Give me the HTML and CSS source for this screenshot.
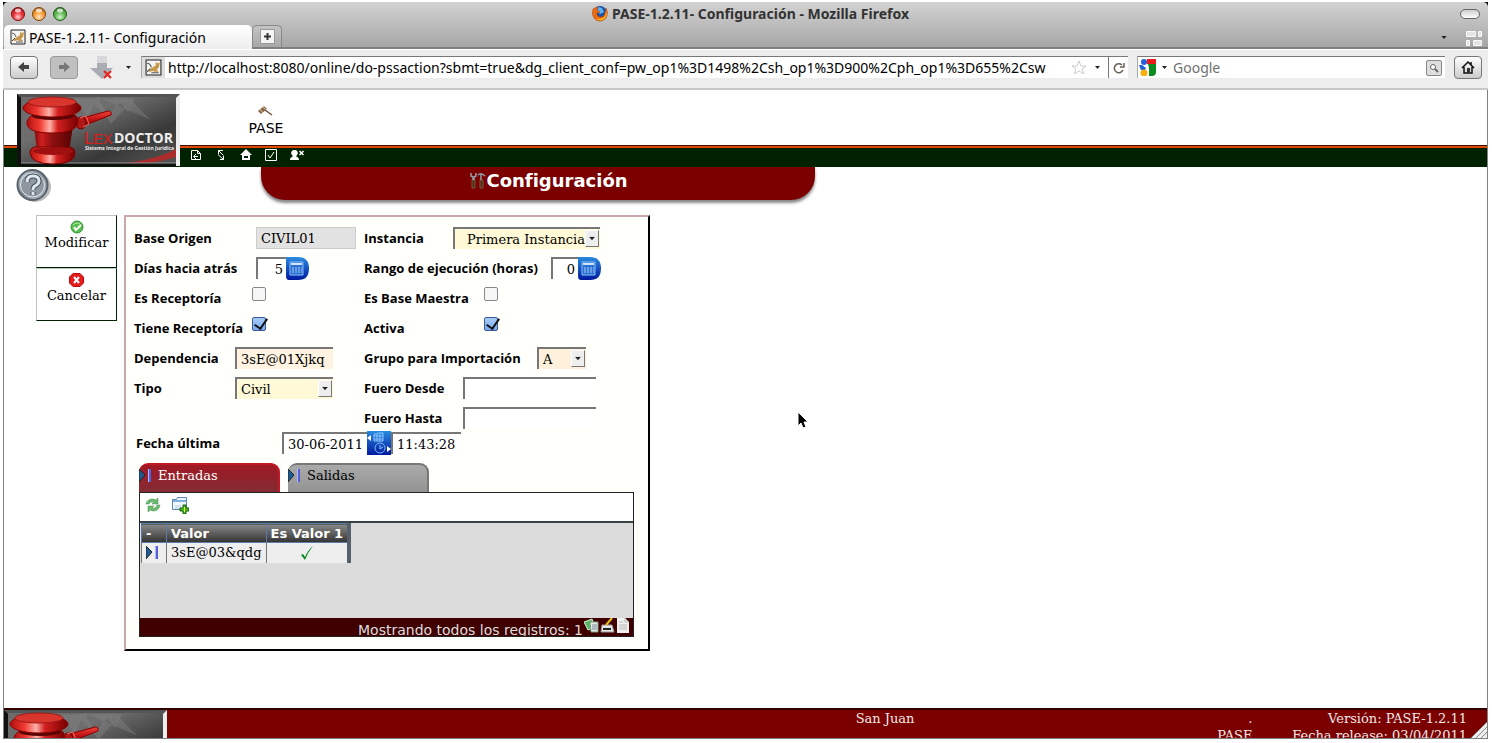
FILE: index.html
```html
<!DOCTYPE html>
<html lang="es">
	<head>
		<meta charset="utf-8">
		<title>PASE-1.2.11- Configuración</title>
		<link rel="stylesheet" href="styles.css">
	</head>
	<body>
		<svg class="defs" aria-hidden="true">
			<defs>
				<linearGradient id="metal" x1="0" y1="0" x2="1" y2="1">
					<stop offset="0" stop-color="#6c6c6c"/><stop offset=".35" stop-color="#6e6e6e"/><stop offset=".7" stop-color="#383838"/><stop offset="1" stop-color="#555"/>
				</linearGradient>
				<linearGradient id="rojo" x1="0" x2="1">
					<stop offset="0" stop-color="#b01010"/><stop offset=".25" stop-color="#f03a30"/><stop offset=".45" stop-color="#ffb0a8"/><stop offset=".6" stop-color="#d42020"/><stop offset="1" stop-color="#700"/>
				</linearGradient>
				<linearGradient id="rojov" x1="0" x2="0" y1="0" y2="1">
					<stop offset="0" stop-color="#f04038"/><stop offset=".5" stop-color="#c01414"/><stop offset="1" stop-color="#600"/>
				</linearGradient>
				<linearGradient id="cuerpo" x1="0" x2="1">
					<stop offset="0" stop-color="#7c0808"/><stop offset=".2" stop-color="#d02020"/><stop offset=".45" stop-color="#901010"/><stop offset="1" stop-color="#580303"/>
				</linearGradient>
				<linearGradient id="azul" x1="0" x2="0" y1="0" y2="1">
					<stop offset="0" stop-color="#2a8be0"/><stop offset="1" stop-color="#0018a0"/>
				</linearGradient>
				<radialGradient id="bola" cx=".5" cy=".75" r=".7">
					<stop offset="0" stop-color="#fff" stop-opacity=".8"/><stop offset=".6" stop-color="#fff" stop-opacity=".1"/><stop offset="1" stop-color="#000" stop-opacity=".4"/>
				</radialGradient>
				<linearGradient id="acero" x1="0" y1="0" x2="1" y2="1">
					<stop offset="0" stop-color="#cfd6dc"/><stop offset=".5" stop-color="#7e8890"/><stop offset="1" stop-color="#c4ccd2"/>
				</linearGradient>
			</defs>
			<symbol id="logo" viewBox="0 0 163 72">
				<rect width="163" height="72" fill="#111"/>
				<path d="M0 0h163v72l-5-4V4H4z" fill="#555"/>
				<path d="M163 0v72h-4V4z" fill="#eee"/>
				<rect x="4" y="3" width="155" height="66" fill="url(#metal)"/>
				<path d="M57 5h60l-6 12-8-10-12 17-14-15-6 13zM80 3l14 26 20-22 18 18" fill="#8a8a8a" fill-opacity=".35" stroke="#888" stroke-opacity=".4"/>
				<path d="M105 69q34-3 54-14v8q-16 5-30 6z" fill="#c22" fill-opacity=".75"/>
				<path d="M4 69h155" stroke="#999"/>
				<path d="M58 26l33-9q4 0 3 4L61 34z" fill="url(#rojov)" stroke="#800"/>
				<ellipse cx="64" cy="29" rx="5" ry="6" fill="#b01818" stroke="#600"/>
				<path d="M63 24l6-2 3 8-6 3" fill="none" stroke="#f66"/>
				<path d="M17 32h39l-4 26H20z" fill="url(#cuerpo)"/>
				<path d="M13 59q0-6 6-6h32q7 0 7 6 0 11-22 11T13 59z" fill="url(#rojo)" stroke="#700"/>
				<ellipse cx="36" cy="57" rx="20" ry="4" fill="#a01010"/>
				<path d="M10 28q2-8 12-8h32q6 0 7 7 0 12-26 12T10 28z" fill="url(#rojo)" stroke="#800"/>
				<ellipse cx="36" cy="22" rx="21" ry="4" fill="#5a0505"/>
				<ellipse cx="35" cy="14" rx="29" ry="9" fill="url(#rojo)" stroke="#800"/>
				<ellipse cx="35" cy="8" rx="24" ry="5" fill="#d8362c" stroke="#a01818"/>
			</symbol>
			<symbol id="gato" viewBox="0 0 16 16">
				<path d="M1 1h14v14H1z" fill="#f4f4f4" stroke="#222"/>
				<path d="M3 11l4-3 3-2 0-3 2 1 2-1-1 5-2 2 2 2H8l1-1-5 1z" fill="#c89848"/>
				<path d="M2 4q3 0 4 4M2 12l3-3M6 13h7" stroke="#555" fill="none"/>
			</symbol>
			<symbol id="calc" viewBox="0 0 23 23">
				<path d="M0 0h12q11 0 11 11.500T12 23H3q-3 0-3-4z" fill="url(#azul)"/>
				<path d="M4 5h13v13H4z" fill="#2b6fd0" stroke="#8cc0f8"/>
				<path d="M5 7h11" stroke="#cfe6ff" stroke-width="2"/>
				<path d="M6 11h10M6 13h10M6 15h10" stroke="#a8d0ff" stroke-dasharray="2 1"/>
			</symbol>
			<symbol id="marca" viewBox="0 0 14 15">
				<path d="M0 1l6 6-6 7z" fill="#1d5c92" stroke="#222"/>
				<path d="M9 1h3v13H9z" fill="#5560d8"/><path d="M9 1h1v13H9z" fill="#b0b8ff"/>
			</symbol>
			<symbol id="flecha" viewBox="0 0 7 4"><path d="M0 0h7L3.500 4z" fill="#222"/></symbol>
		</svg>

		<div class="ventana">
			<div class="titulo">
				<div class="semaforo">
					<svg viewBox="0 0 14 14"><circle cx="7" cy="7" r="6.500" fill="#e8141c" stroke="#801010"/><circle cx="7" cy="7" r="6" fill="url(#bola)"/><ellipse cx="7" cy="3.500" rx="3" ry="2" fill="#fff" opacity=".7"/></svg>
					<svg viewBox="0 0 14 14"><circle cx="7" cy="7" r="6.500" fill="#f89018" stroke="#804010"/><circle cx="7" cy="7" r="6" fill="url(#bola)"/><ellipse cx="7" cy="3.500" rx="3" ry="2" fill="#fff" opacity=".7"/></svg>
					<svg viewBox="0 0 14 14"><circle cx="7" cy="7" r="6.500" fill="#48b038" stroke="#206018"/><circle cx="7" cy="7" r="6" fill="url(#bola)"/><ellipse cx="7" cy="3.500" rx="3" ry="2" fill="#fff" opacity=".7"/></svg>
				</div>
				<div class="nombre">
					<svg width="16" height="17" viewBox="0 0 16 17"><circle cx="8" cy="8" r="7" fill="#1d50a8"/><path d="M6 2l4 1 2 4-4 2-3-3z" fill="#5cb4ee"/><path d="M1 4q-2 7 3 11 6 3 10-2 3-5 0-10 0 3-1 4 0 5-5 5-4-1-3-4l3-1-3-2 1-3-3 1z" fill="#ee6a10" stroke="#b03a08" stroke-width=".5"/><path d="M14 5q1 5-3 8-4 2-7 0 3 4 8 1 4-3 2-9z" fill="#fcc820"/></svg>
					<span>PASE-1.2.11- Configuración - Mozilla Firefox</span>
				</div>
				<button class="pildora" aria-label="Ocultar barra"></button>
			</div>
			<div class="pestanas">
				<div class="pestana"><svg width="16" height="16"><use href="#gato"/></svg><span>PASE-1.2.11- Configuración</span></div>
				<button class="nueva" aria-label="Nueva pestaña"><svg width="15" height="15" viewBox="0 0 15 15"><path d="M.5.500h14v14H.5z" fill="#f4f4f4" stroke="#999"/><path d="M4 7.500h7M7.500 4v7" stroke="#333" stroke-width="2"/></svg></button>
				<span class="lista"><svg width="6" height="3"><use href="#flecha"/></svg></span>
				<svg class="grupos" width="17" height="15" viewBox="0 0 17 15"><path d="M1.500.500h9v5h-9zM13.500.500h3v5h-3zM1.500 9.500h3v5h-3zM8.500 9.500h8v5h-8z" fill="#e4e4e4" stroke="#fafafa"/></svg>
			</div>
			<div class="navegacion">
				<button class="boton" aria-label="Atrás"><svg width="14" height="12" viewBox="0 0 14 12"><path d="M1 6l6-5v3h5v4H7v3z" fill="#444"/></svg></button>
				<button class="boton apagado" aria-label="Adelante"><svg width="14" height="12" viewBox="0 0 14 12"><path d="M13 6L7 1v3H2v4h5v3z" fill="#777"/></svg></button>
				<svg class="bajar" width="23" height="24" viewBox="0 0 23 24"><path d="M7 1h10v12h6L12 24 0 13h7z" fill="#a9acb2"/><path d="M7 1h10v7H7z" fill="#d8d8da"/><path d="M14 16l7 7M21 16l-7 7" stroke="#e82020" stroke-width="2"/></svg>
				<svg class="menos" width="5" height="3"><use href="#flecha"/></svg>
				<div class="direccion">
					<span class="sitio"><svg width="17" height="17"><use href="#gato"/></svg></span>
					<input type="text" aria-label="Dirección" value="http://localhost:8080/online/do-pssaction?sbmt=true&amp;dg_client_conf=pw_op1%3D1498%2Csh_op1%3D900%2Cph_op1%3D655%2Csw">
					<svg width="16" height="15" viewBox="0 0 16 15"><path d="M8 1l2 5h5l-4 3 2 5-5-3-5 3 2-5-4-3h5z" fill="#fff" stroke="#ccc"/></svg>
					<svg class="abre" width="5" height="3"><use href="#flecha"/></svg>
					<button class="recargar" aria-label="Recargar"><svg width="12" height="12" viewBox="0 0 12 12"><path d="M10 8a4.500 4.500 0 1 1-1-5M7 5h4V1" fill="none" stroke="#666052" stroke-width="1.500"/></svg></button>
				</div>
				<div class="buscar">
					<svg width="17" height="17" viewBox="0 0 17 17"><path d="M8 0h9v5H8z" fill="#f01818"/><path d="M9 5h8v8q0 4-4 4h-3V9z" fill="#0c8c20"/><circle cx="5" cy="3" r="3" fill="#2060d8"/><path d="M0 6h3l4 3-1 2H2z" fill="#2060d8"/><circle cx="5" cy="14" r="3.500" fill="#f8b010"/></svg>
					<svg width="5" height="3"><use href="#flecha"/></svg>
					<input type="text" aria-label="Buscar" placeholder="Google">
					<button class="lupa" aria-label="Buscar en la web"><svg width="10" height="10" viewBox="0 0 10 10"><circle cx="4" cy="4" r="2.500" fill="#fff" stroke="#666"/><path d="M6 6l3 3" stroke="#666" stroke-width="2"/></svg></button>
				</div>
				<button class="boton casa" aria-label="Inicio"><svg width="16" height="16" viewBox="0 0 16 16"><path d="M2 9l6-6 6 6M4 8v6h8V8M11 3v3" fill="none" stroke="#111" stroke-width="1.500"/><path d="M7 9h3v5H7z" fill="#333"/></svg></button>
			</div>

			<div class="pagina">
				<header class="cabecera">
					<svg class="logo" width="163" height="72">
						<use href="#logo"/>
						<text x="67" y="50" class="logo-lex">L<tspan class="logo-ex">EX</tspan><tspan class="logo-guion">-</tspan></text>
						<text x="97" y="49" class="logo-doctor">DOCTOR</text>
						<text x="68" y="56" class="logo-sub">Sistema Integral de Gestión Jurídica</text>
					</svg>
					<div class="menu">
						<a href="#" class="modulo"><svg width="15" height="11" viewBox="0 0 15 11"><path d="M0 6l6-5 3 3-6 5z" fill="#8a6a48"/><path d="M2 4l3 4M5 2l3 3" stroke="#d8c8a8"/><path d="M7 5l7 5" stroke="#6a5038" stroke-width="1.500"/></svg>PASE</a>
						<nav class="iconos">
							<a href="#" aria-label="Salir"><svg viewBox="0 0 12 12"><path d="M1.500 1.500h6l3 3v6h-9zM7.500 1.500v3h3M8 7.500H4M6 5L3.500 7.500 6 10" fill="none" stroke="#fff"/></svg></a>
							<a href="#" aria-label="Refrescar"><svg viewBox="0 0 12 12"><path d="M3.500 5V1.500H8M3.500 1.500l5 5M5 10.500h3.500V7M8.500 10.500L3 5.500" fill="none" stroke="#fff"/></svg></a>
							<a href="#" aria-label="Inicio"><svg viewBox="0 0 12 12"><path d="M6 0l6 6H0zM2 6h8v5H2z" fill="#fff"/><path d="M4 7h4v2H4z" fill="#020"/></svg></a>
							<a href="#" aria-label="Tareas"><svg viewBox="0 0 12 12"><path d="M.5.500h11v11H.5zM3 6l2 3 4-6" fill="none" stroke="#fff"/></svg></a>
							<a href="#" aria-label="Usuario"><svg class="ancho" viewBox="0 0 14 12"><path d="M4.500 1a3 3 0 0 1 2 5.500V8q2.500 0 2.500 3H0q0-3 2.500-3V6.500a3 3 0 0 1 2-5.500z" fill="#fff"/><path d="M9.500 2l4 4M13.500 2l-4 4" stroke="#fff" stroke-width="1.500"/></svg></a>
						</nav>
					</div>
				</header>
				<div class="encabezado">
					<a href="#" class="ayuda" aria-label="Ayuda"><svg width="37" height="33" viewBox="0 0 37 33"><ellipse cx="20" cy="18" rx="16" ry="15" fill="#bbb"/><circle cx="17.500" cy="16" r="15" fill="url(#acero)" stroke="#59636d" stroke-width="2"/><circle cx="17.500" cy="16" r="12" fill="#8f969d" stroke="#dfe6ec"/><path d="M12 13q0-6 6-6t6 5q0 3-4 5-2 1-2 4M18 23v3" fill="none" stroke="#46525e" stroke-width="5"/><path d="M12 13q0-6 6-6t6 5q0 3-4 5-2 1-2 4M18 23v3" fill="none" stroke="#dce6ee" stroke-width="3"/></svg></a>
					<h1><svg width="16" height="17" viewBox="0 0 16 17"><path d="M2 8h3v8H2zM10 8h3v8h-3z" fill="#4a2a16" stroke="#7a5a3a"/><path d="M1 1v3l2 1v3M6 1v3L4 5v3M8 3q3-3 7 1M11 2v6" fill="none" stroke="#8ea0a8" stroke-width="1.500"/></svg>Configuración</h1>
				</div>
				<div class="contenido">
					<div class="acciones">
						<button form="formulario"><svg width="14" height="14" viewBox="0 0 14 14"><circle cx="7" cy="7" r="6" fill="#58bd50" stroke="#2c9430"/><path d="M3 5q4-4 8 0" stroke="#b4e8ac" fill="none"/><path d="M4 7l2 3 5-5" fill="none" stroke="#fff" stroke-width="2"/></svg>Modificar</button>
						<button><svg width="15" height="14" viewBox="0 0 15 14"><path d="M4 .5h7l3.500 3.500v6L11 13.500H4L.5 10V4z" fill="#e41c1c" stroke="#b80c0c"/><path d="M5 4l5 6M10 4l-5 6" stroke="#fff" stroke-width="2"/></svg>Cancelar</button>
					</div>
					<form id="formulario" class="ficha">
						<div class="campos">
							<div class="columna">
								<div class="fila"><label class="e-larga" for="base">Base Origen</label><input type="text" id="base" class="base" value="CIVIL01" readonly></div>
								<div class="fila"><label class="e-larga" for="dias">Días hacia atrás</label><input type="text" id="dias" class="numero" value="5"><svg width="23" height="23"><use href="#calc"/></svg></div>
								<div class="fila"><label class="e-check" for="receptoria">Es Receptoría</label><input type="checkbox" id="receptoria"></div>
								<div class="fila"><label class="e-check" for="tiene">Tiene Receptoría</label><input type="checkbox" id="tiene" checked></div>
								<div class="fila"><label class="e-corta" for="dependencia">Dependencia</label><input type="text" id="dependencia" class="crema" value="3sE@01Xjkq"></div>
								<div class="fila"><label class="e-corta" for="tipo">Tipo</label><span class="lista-sel tipo"><select id="tipo"><option>Civil</option></select><svg viewBox="0 0 7 4"><use href="#flecha"/></svg></span></div>
							</div>
							<div class="columna">
								<div class="fila"><label class="d-instancia" for="instancia">Instancia</label><span class="lista-sel instancia"><select id="instancia"><option>Primera Instancia</option></select><svg viewBox="0 0 7 4"><use href="#flecha"/></svg></span></div>
								<div class="fila"><label class="d-rango" for="rango">Rango de ejecución (horas)</label><input type="text" id="rango" class="numero corto" value="0"><svg width="23" height="23"><use href="#calc"/></svg></div>
								<div class="fila"><label class="d-check" for="maestra">Es Base Maestra</label><input type="checkbox" id="maestra"></div>
								<div class="fila"><label class="d-check" for="activa">Activa</label><input type="checkbox" id="activa" checked></div>
								<div class="fila"><label class="d-grupo" for="grupo">Grupo para Importación</label><span class="lista-sel grupo"><select id="grupo"><option>A</option></select><svg viewBox="0 0 7 4"><use href="#flecha"/></svg></span></div>
								<div class="fila"><label class="d-fuero" for="desde">Fuero Desde</label><input type="text" id="desde" class="fuero"></div>
								<div class="fila"><label class="d-fuero" for="hasta">Fuero Hasta</label><input type="text" id="hasta" class="fuero"></div>
							</div>
						</div>
						<div class="fila fecha">
							<label for="fecha">Fecha última</label>
							<input type="text" id="fecha" value="30-06-2011">
							<svg width="24" height="24" viewBox="0 0 24 24"><path d="M0 0h24v24H0z" fill="url(#azul)"/><path d="M7 3h3l1-1h5v8H7zM7 5h9M7 8h9M10 3v7M13 3v7" fill="none" stroke="#8cc8ff"/><circle cx="13" cy="17" r="5" fill="none" stroke="#7ab8f8"/><path d="M13 14v4l3-2" fill="none" stroke="#9cf"/><path d="M0 7l4-3v6zM24 18l-4-3v6z" fill="#fff"/></svg>
							<input type="text" class="hora" aria-label="Hora" value="11:43:28">
						</div>
						<div class="solapas">
							<button type="button" class="solapa activa"><svg width="14" height="15"><use href="#marca"/></svg>Entradas</button>
							<button type="button" class="solapa"><svg width="14" height="15"><use href="#marca"/></svg>Salidas</button>
						</div>
						<div class="panel">
							<div class="herramientas">
								<button type="button" aria-label="Actualizar"><svg width="16" height="16" viewBox="0 0 16 16"><path d="M1 7q1-5 7-5l3 1 2-2v6H7l2-2Q5 4 4 7z" fill="#6dba6d" stroke="#3c8c48" stroke-width=".5"/><path d="M15 8q-1 6-7 6l-3-1-2 2V9h6l-2 2q4 1 5-3z" fill="#6dba6d" stroke="#3c8c48" stroke-width=".5"/></svg></button>
								<button type="button" aria-label="Agregar"><svg width="17" height="17" viewBox="0 0 17 17"><path d="M.5 2.500h4l1-2h9v12H.5z" fill="#eef5fc" stroke="#5b86b4"/><path d="M1 3h13v2H1z" fill="#7fb0e0"/><path d="M3 9h6M3 11h5" stroke="#b8c8d8"/><path d="M11 8h3v3h3v3h-3v3h-3v-3H8v-3h3z" fill="#48b820" stroke="#186010"/><path d="M12 10h1v5h-1z" fill="#e8f040"/></svg></button>
							</div>
							<div class="cuerpo">
								<table>
									<thead><tr><th>-</th><th>Valor</th><th>Es Valor 1</th></tr></thead>
									<tbody><tr><td><svg width="14" height="15"><use href="#marca"/></svg></td><td>3sE@03&amp;qdg</td><td><svg width="14" height="14" viewBox="0 0 14 14"><path d="M1 9l2-1 2 3Q8 4 13 0 8 6 5 14z" fill="#0a8a20"/></svg></td></tr></tbody>
								</table>
							</div>
							<div class="pie-panel">
								<span>Mostrando todos los registros: 1</span>
								<svg width="15" height="15" viewBox="0 0 15 15"><path d="M0 4l8-3 3 8-7 3z" fill="#58b868" stroke="#d8f0d8"/><path d="M6 4h8v10H7z" fill="#e8ece8" stroke="#7a9a7a"/><path d="M8 7h5M8 9h5M8 11h5" stroke="#789"/></svg>
								<svg width="15" height="15" viewBox="0 0 15 15"><path d="M2 7h10l2 7H1z" fill="#e8e8e8" stroke="#999"/><path d="M3 11h8" stroke="#222" stroke-width="2"/><path d="M6 7l6-7" stroke="#e8c020" stroke-width="2"/></svg>
								<svg width="14" height="15" viewBox="0 0 14 15"><path d="M1 0h8l4 4v11H1z" fill="#f0f0f0"/><path d="M9 0v4h4M3 4h4M3 7h8M3 9h8M3 11h8" fill="none" stroke="#bbb"/></svg>
							</div>
						</div>
					</form>
				</div>
				<footer class="pie">
					<svg class="logo" width="163" height="72"><use href="#logo"/></svg>
					<div>San Juan</div>
					<div>.<br>PASE</div>
					<div>Versión: PASE-1.2.11<br>Fecha release: 03/04/2011</div>
					<svg class="agarre" width="16" height="16" viewBox="0 0 16 16"><path d="M16 0v16H0z" fill="#eee"/><path d="M0 16L16 0M5 16L16 5M10 16l6-6" stroke="#888"/></svg>
				</footer>
			</div>
		</div>
		<svg class="puntero" width="12" height="19" viewBox="0 0 12 19"><path d="M1 1v14l3-3 2 5 3-1-2-5h4z" fill="#000" stroke="#fff"/></svg>
	</body>
</html>
```
FILE: styles.css
```css
*{
	box-sizing: border-box;
}

body{
	margin: 0;
	height: 100vh;
	padding: 2px 4px 4px 3px;
	background-color: #fff;
	font-family: "DejaVu Serif", serif;
	font-size: 13px;
	color: #000;
}

button, input, select{
	font-family: inherit;
	font-size: inherit;
	color: inherit;
}

button{
	padding: 0;
}

a{
	color: inherit;
	text-decoration: none;
}

svg{
	display: block;
	flex: none;
}

.defs{
	position: absolute;
	width: 0;
	height: 0;
}

.ventana{
	height: 100%;
	display: flex;
	flex-direction: column;
	background-color: #000;
	overflow: hidden;
}

/* marco del navegador */
.titulo{
	height: 23px;
	display: flex;
	align-items: center;
	padding: 0 8px;
	border-radius: 5px 5px 0 0;
	background: linear-gradient(#d2d2d2, #bcbcbc);
	font-family: "Noto Sans", sans-serif;
}

.semaforo{
	display: flex;
	gap: 7px;
	width: 80px;
}

.semaforo svg{
	width: 14px;
	height: 14px;
}

.nombre{
	flex: 1;
	display: flex;
	justify-content: center;
	align-items: center;
	gap: 4px;
	font-weight: bold;
	font-size: 14px;
	line-height: 20px;
	color: #333;
}

.pildora{
	width: 20px;
	height: 10px;
	margin-left: 50px;
	border: 1px solid #666;
	border-radius: 5px;
	background: linear-gradient(#ccc, #fff);
}

.pestanas{
	height: 24px;
	display: flex;
	align-items: flex-end;
	background: linear-gradient(#bcbcbc, #a6a6a6);
	border-bottom: 2px solid #808080;
	font-family: "Noto Sans", sans-serif;
}

.pestana{
	width: 248px;
	height: 24px;
	margin: 0 0 -2px 1px;
	padding: 0 6px;
	display: flex;
	align-items: center;
	gap: 3px;
	border-radius: 5px 5px 0 0;
	background: linear-gradient(#fff, #ededed);
	font-size: 14px;
}

.nueva{
	width: 30px;
	height: 22px;
	display: flex;
	align-items: center;
	justify-content: center;
	border: 1px solid #888;
	border-bottom: 0;
	border-radius: 5px 5px 0 0;
	background: linear-gradient(#c4c4c4, #a8a8a8);
}

.lista{
	margin: 0 18px 8px auto;
}

.grupos{
	margin: 0 6px 1px 0;
}

.navegacion{
	height: 41px;
	display: flex;
	align-items: center;
	padding: 0 6px 4px 7px;
	background-color: #ededed;
	border-top: 1px solid #fff;
	border-bottom: 2px solid #c8c8c8;
	font-family: "Noto Sans", sans-serif;
	font-size: 14px;
}

.boton{
	width: 28px;
	height: 23px;
	margin-right: 12px;
	display: flex;
	align-items: center;
	justify-content: center;
	border: 1px solid #777;
	border-radius: 4px;
	background: linear-gradient(#fff, #ccc);
}

.apagado{
	background: #c0c0c0;
	border-color: #999;
}

.casa{
	margin: 0;
}

.menos{
	margin: 0 10px 0 13px;
}

.direccion{
	flex: 1;
	height: 22px;
	display: flex;
	align-items: center;
	gap: 8px;
	background-color: #fff;
	border-top: 1px solid #777;
	border-left: 1px solid #aaa;
}

.sitio{
	align-self: stretch;
	width: 23px;
	display: flex;
	align-items: center;
	justify-content: center;
	margin-right: -5px;
	background-color: #ddd;
}

.direccion input, .buscar input{
	flex: 1;
	min-width: 0;
	padding: 0;
	border: 0;
	outline: none;
	background: none;
}

.recargar{
	width: 20px;
	align-self: stretch;
	display: flex;
	align-items: center;
	justify-content: center;
	border: 0;
	border-left: 1px solid #777;
	background-color: #fff;
}

.buscar{
	width: 308px;
	height: 22px;
	margin: 0 9px;
	padding: 0 3px 0 1px;
	display: flex;
	align-items: center;
	gap: 6px;
	background-color: #fff;
	border-top: 1px solid #777;
	border-left: 1px solid #aaa;
}

.buscar input::placeholder{
	color: #707070;
	opacity: 1;
}

.lupa{
	width: 16px;
	height: 16px;
	display: flex;
	align-items: center;
	justify-content: center;
	border: 1px solid #888;
	border-radius: 2px;
	background-color: #ddd;
}

/* pagina */
.pagina{
	flex: 1;
	min-height: 0;
	display: flex;
	flex-direction: column;
	background-color: #fff;
	border: 1px solid #808080;
	border-top: 0;
	overflow: hidden;
}

.cabecera{
	height: 77px;
	display: flex;
	padding: 4px 0 0 13px;
	background: linear-gradient(#fff 55px, #401000 55px, #401000 56px, #e04808 56px, #e04808 58px, #020 58px);
}

.logo-lex{
	font: 17px "Liberation Sans", sans-serif;
	fill: #e01818;
}

.logo-ex{
	font-size: 14px;
}

.logo-guion{
	fill: #999;
	font-size: 8px;
}

.logo-doctor{
	font: bold 14px "Open Sans", sans-serif;
	fill: #eee;
}

.logo-sub{
	font: bold 5px "Open Sans", sans-serif;
	fill: #eee;
}

.menu{
	display: flex;
	flex-direction: column;
	justify-content: space-between;
	padding: 11px 0 6px 10px;
}

.modulo{
	align-self: center;
	margin-left: 38px;
	display: flex;
	flex-direction: column;
	align-items: center;
	gap: 4px;
	font: 14px "DejaVu Sans", sans-serif;
}

.iconos{
	display: flex;
	gap: 13px;
}

.iconos svg{
	width: 12px;
	height: 12px;
}

.iconos .ancho{
	width: 14px;
}

.encabezado{
	display: flex;
	align-items: flex-start;
}

.ayuda{
	margin: 2px 209px 0 11px;
}

h1{
	width: 554px;
	height: 33px;
	margin: 0;
	padding: 0 0 6px 22px;
	display: flex;
	align-items: center;
	justify-content: center;
	border-radius: 0 0 24px 24px;
	background-color: #7b0000;
	box-shadow: 0 3px 3px #888;
	color: #fff;
	font: bold 18px "DejaVu Sans", sans-serif;
}

.contenido{
	flex: 1;
	min-height: 0;
	display: flex;
	align-items: flex-start;
	gap: 7px;
	padding: 13px 32px 0;
}

.acciones{
	width: 81px;
	display: flex;
	flex-direction: column;
}

.acciones button{
	height: 53px;
	padding: 4px 0 0;
	display: flex;
	flex-direction: column;
	align-items: center;
	gap: 1px;
	border: 1px solid #bcc6bc;
	border-right-color: #020;
	border-bottom-color: #020;
	background-color: #fff;
}

.ficha{
	width: 526px;
	padding: 6px 14px 12px 8px;
	border: 2px solid #000;
	border-top-color: #c8a8a8;
	border-left-color: #c8a8a8;
	background-color: #fffffc;
}

.campos{
	display: grid;
	grid-template-columns: 230px 1fr;
}

.fila{
	height: 30px;
	display: flex;
	align-items: center;
}

label{
	font: bold 13px "Open Sans", sans-serif;
	white-space: nowrap;
	flex: none;
}

.e-larga{
	width: 122px;
}

.e-check{
	width: 117px;
}

.e-corta{
	width: 101px;
}

.d-instancia{
	width: 89px;
}

.d-rango{
	width: 187px;
}

.d-check{
	width: 119px;
}

.d-grupo{
	width: 173px;
}

.d-fuero{
	width: 99px;
}

.fila input[type=text]{
	height: 22px;
	padding: 0 4px;
	border: 0 solid #777;
	border-width: 2px 0 0 2px;
	background-color: #fff;
}

.fila input.base{
	width: 100px;
	border: 1px solid #ccc;
	background-color: #e2e2e2;
}

.fila input.numero{
	width: 30px;
	padding: 0 3px 0 0;
	text-align: right;
}

.fila input.corto{
	width: 27px;
}

.fila input.crema{
	width: 98px;
	background-color: #fff3e2;
}

.fuero{
	width: 133px;
}

.fila input[type=checkbox]{
	appearance: none;
	width: 14px;
	height: 14px;
	margin: 0 0 9px 1px;
	border: 1px solid #888;
	border-radius: 2px;
	background-color: #f6f6f6;
}

.fila input[type=checkbox]:checked{
	background: linear-gradient(#a8ccf8, #78aaf0);
	border-color: #3a5a90;
}

.fila input[type=checkbox]:checked::after{
	content: "";
	display: block;
	width: 6px;
	height: 11px;
	margin: -2px 0 0 4px;
	border: solid #111;
	border-width: 0 2px 2px 0;
	transform: rotate(35deg);
}

.lista-sel{
	position: relative;
}

.lista-sel select{
	appearance: none;
	width: 100%;
	height: 22px;
	padding: 0 4px;
	border: 0 solid #777;
	border-width: 2px 0 0 2px;
	border-radius: 0;
	background-color: #fff9d8;
}

.lista-sel svg{
	position: absolute;
	top: 3px;
	right: 1px;
	width: 14px;
	height: 17px;
	padding: 0 3px;
	border: 1px solid #fff;
	border-right-color: #777;
	border-bottom-color: #777;
	background-color: #eee;
	pointer-events: none;
}

.tipo{
	width: 98px;
}

.instancia{
	width: 147px;
}

.instancia select{
	padding: 0 0 0 12px;
}

.grupo{
	width: 49px;
}

.grupo select{
	background-color: #fff0dc;
}

.fecha{
	height: 28px;
	margin-top: -4px;
}

.fecha label{
	width: 148px;
	padding-left: 2px;
}

.fecha input{
	width: 85px;
}

.fecha .hora{
	width: 70px;
}

.solapas{
	display: flex;
	gap: 8px;
	margin: 6px 0 0 5px;
}

.solapa{
	width: 141px;
	height: 29px;
	padding: 3px 0 0;
	display: flex;
	align-items: flex-start;
	gap: 5px;
	border: 2px solid #777;
	border-bottom: 0;
	border-left: 0;
	border-radius: 9px 9px 0 0;
	background: linear-gradient(#aaa, #939393);
}

.activa.solapa{
	border-color: #c01824;
	background: linear-gradient(#a01824, #832c34);
	color: #fff;
}

.panel{
	margin-left: 5px;
	border: 1px solid #222;
	background-color: #dcdcdc;
}

.herramientas{
	height: 28px;
	display: flex;
	align-items: flex-start;
	gap: 11px;
	padding: 4px 5px;
	background-color: #fff;
}

.herramientas button{
	border: 0;
	background: none;
}

.cuerpo{
	height: 97px;
	border-top: 2px solid #3a4446;
}

table{
	margin-left: 1px;
	border-collapse: collapse;
	border-right: 4px solid #56606c;
}

th{
	height: 19px;
	padding: 0 4px;
	border: 1px solid #5a7ca8;
	background: linear-gradient(#888, #333);
	color: #fff;
	font: bold 13px "DejaVu Sans", sans-serif;
	text-align: left;
}

td{
	height: 20px;
	padding: 0 4px;
	border-left: 1px solid #777;
	border-right: 1px solid #777;
	background-color: #eee;
}

td:first-child{
	padding-right: 6px;
}

td svg{
	margin: 0 auto;
}

.pie-panel{
	height: 18px;
	display: flex;
	justify-content: flex-end;
	gap: 1px;
	padding-right: 3px;
	background-color: #400000;
	color: #ddd;
	font: 14px/25px "DejaVu Sans", sans-serif;
	overflow: hidden;
}

.pie{
	position: relative;
	height: 30px;
	display: grid;
	grid-template-columns: 163px 115fr 52fr 33fr;
	padding-right: 20px;
	border-top: 2px solid #300;
	background-color: #7b0000;
	color: #f0e8e8;
	line-height: 17px;
	text-align: right;
	overflow: hidden;
}

.agarre{
	position: absolute;
	right: 0;
	bottom: 0;
}

.puntero{
	position: absolute;
	left: 797px;
	top: 411px;
}
```
